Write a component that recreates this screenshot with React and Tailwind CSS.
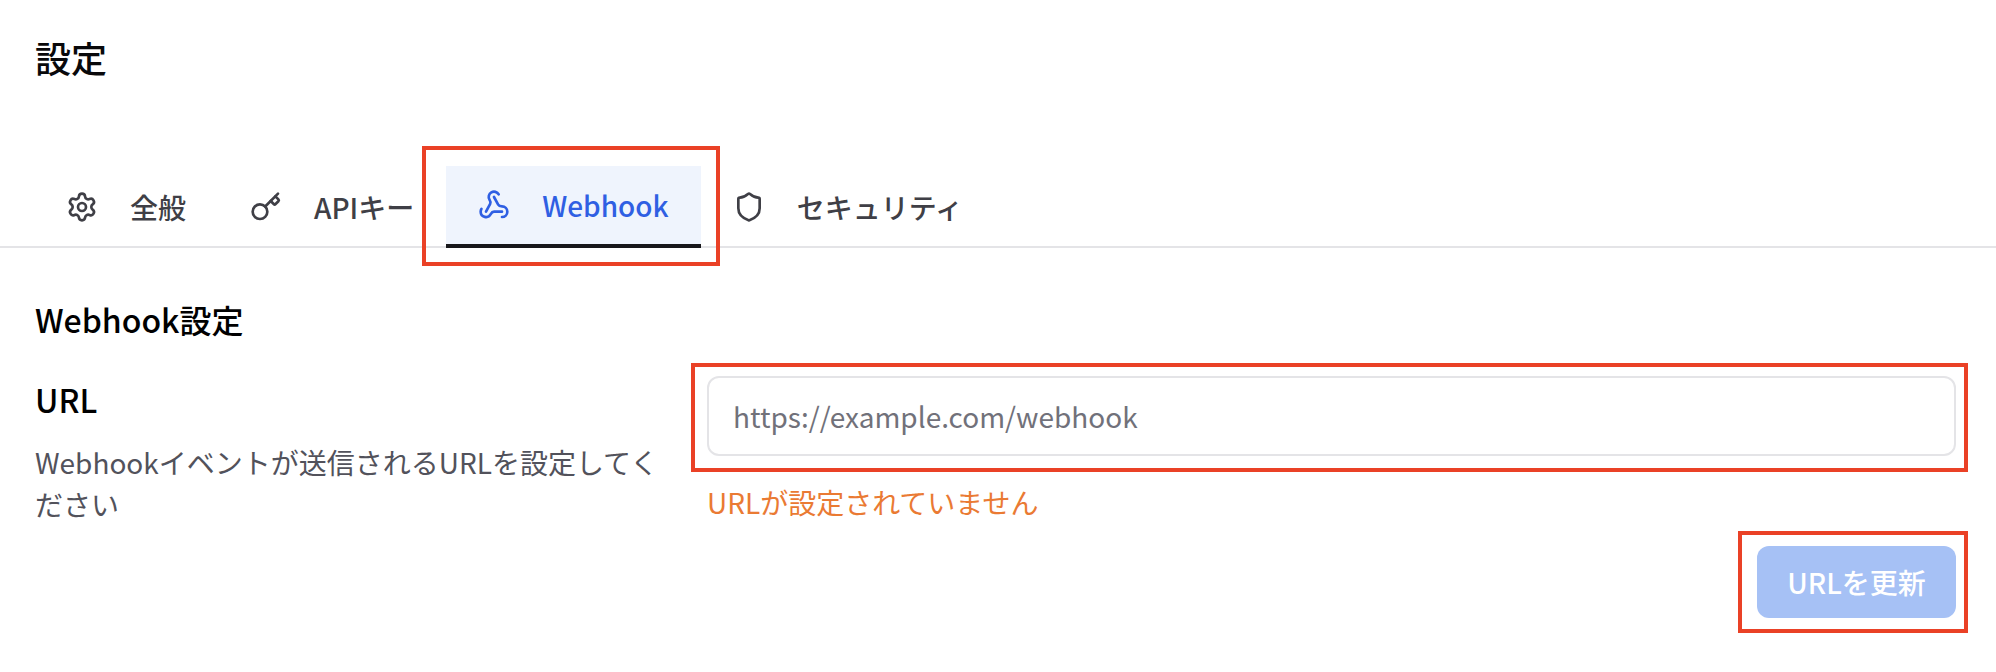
import { Settings, Key, Webhook, Shield } from "lucide-react";

const tabs = [
  { label: "全般", icon: Settings },
  { label: "APIキー", icon: Key },
  { label: "Webhook", icon: Webhook, active: true },
  { label: "セキュリティ", icon: Shield },
];

const App = () => {
  return (
    <div className="min-h-[672px] bg-white font-['Noto_Sans_CJK_JP','Noto_Sans',sans-serif] text-[#09090b]">
      <div className="pl-[35px] pr-10 pt-[31px]">
        <h1 className="text-[36px] leading-[52px] font-medium">設定</h1>
      </div>

      {/* Tabs */}
      <div className="mt-[81px] h-[84px] border-b-2 border-[#e4e4e7] pl-[34px] flex items-start pt-[2px]">
        {tabs.map((tab) => {
          const Icon = tab.icon;
          return (
            <div
              key={tab.label}
              className={
                tab.active
                  ? "relative h-[82px] flex items-center gap-8 px-8 bg-[#eff4fd] text-[#2f5fe3] border-b-4 border-[#18181b]"
                  : "relative h-[82px] flex items-center gap-8 px-8 text-[#3f3f46]"
              }
            >
              <Icon size={32} strokeWidth={2} />
              <span className="text-[28px] leading-[40px] font-medium">{tab.label}</span>
              {tab.active && (
                <div className="absolute -left-[24px] -right-[19px] -top-[20px] -bottom-[22px] border-4 border-[#ea4126]" />
              )}
            </div>
          );
        })}
      </div>

      {/* Webhook settings */}
      <div className="pl-[35px] pr-10 pt-[47px]">
        <h2 className="text-[32px] leading-[48px] font-medium text-black">Webhook設定</h2>
        <div className="mt-[33px] flex">
          <div className="w-[672px] shrink-0 pr-[36px]">
            <div className="text-[32px] leading-[46px] font-medium text-black">URL</div>
            <p className="mt-[19px] text-[28px] leading-[42px] text-[#52525b]">
              Webhookイベントが送信されるURLを設定してください
            </p>
          </div>
          <div className="flex-1 flex flex-col">
            <div className="relative">
              <input
                readOnly
                placeholder="https://example.com/webhook"
                className="w-full h-[80px] rounded-[12px] border-2 border-[#e4e4e7] px-6 text-[28px] outline-none placeholder:text-[#71717a]"
              />
              <div className="absolute -left-[16px] -right-[12px] -top-[13px] -bottom-[16px] border-4 border-[#ea4126]" />
            </div>
            <p className="mt-[25px] text-[28px] leading-[42px] text-[#ea7a33]">URLが設定されていません</p>
            <div className="mt-[23px] flex justify-end">
              <div className="relative">
                <button className="h-[72px] w-[199px] rounded-[12px] bg-[#a6c1f5] text-white text-[28px] font-medium">
                  URLを更新
                </button>
                <div className="absolute -left-[19px] -right-[12px] -top-[15px] -bottom-[15px] border-4 border-[#ea4126]" />
              </div>
            </div>
          </div>
        </div>
      </div>
    </div>
  );
};

export default App;
